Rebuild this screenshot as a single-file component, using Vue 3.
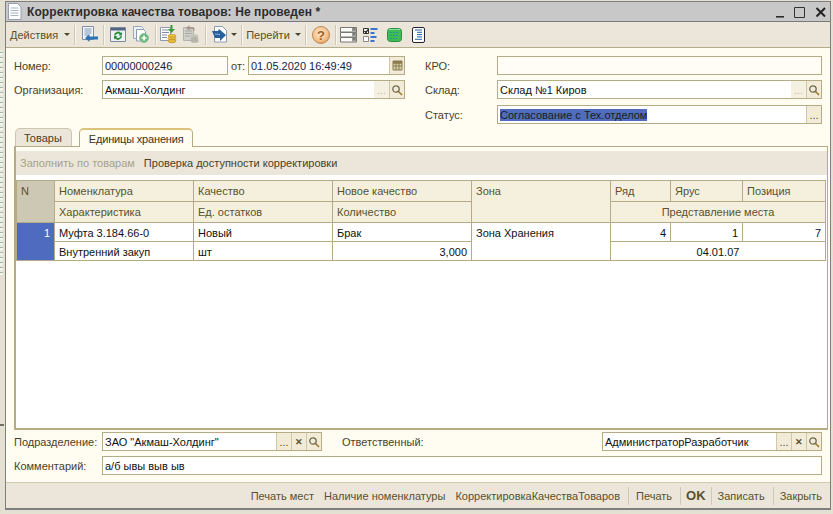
<script setup>
const footerActions = [
  { label: 'Печать мест' },
  { label: 'Наличие номенклатуры' },
  { label: 'КорректировкаКачестваТоваров' },
  { label: 'Печать', sep: true },
  { label: 'OK', sep: true, bold: true },
  { label: 'Записать', sep: true, tight: true, narrow: true },
  { label: 'Закрыть', sep: true, narrow: true }
]
</script>

<template>
  <div class="desktop">
    <div class="window">
      <header class="title">
        <svg class="doc" width="15" height="17" viewBox="0 0 15 17">
          <path d="M1.500.5h9l3.500 3.500v12.500h-12.500z" fill="#fff" stroke="#94a0b2" />
          <path d="M3.500 5h8M3.500 7.500h8M3.500 10h8M3.500 12.500h8" stroke="#a9b4c4" />
        </svg>
        <span class="title-text">Корректировка качества товаров: Не проведен *</span>
        <svg class="win-btns" width="54" height="15" viewBox="0 0 54 15">
          <path d="M0 12.800h8" stroke="#222" stroke-width="1.500" />
          <path d="M18.500 3.500h10v10h-10z" fill="none" stroke="#333" />
          <path d="M40.500 4l8.500 8.500M49 4l-8.500 8.500" stroke="#222" stroke-width="2" />
        </svg>
      </header>

      <div class="toolbar">
        <span class="tool-text">Действия</span><i class="caret c6"></i>
        <b class="tsep s4"></b>
        <svg class="m6" width="17" height="17" viewBox="0 0 17 17">
          <path d="M1.500 .5h11v13h-11z" fill="#f4f7fb" stroke="#7f8ea5" />
          <path d="M3.500 3h7M3.500 5h7M3.500 7h7M3.500 9h4" stroke="#7b93b8" />
          <path d="M17 10.500H8.500V8L4 12l4.500 4v-2.500H17z" fill="#2e74b5" />
        </svg>
        <b class="tsep s5"></b>
        <svg class="m6" width="16" height="15" viewBox="0 0 16 15">
          <path d="M.5 .5h15v14H.500z" fill="#eef2f7" stroke="#7d8a9c" />
          <path d="M1 1h14v2.500H1z" fill="#51667f" />
          <path d="M4 8.500a4 4 0 0 1 7-2.500l1-1v3.500H8.500l1.200-1.200A2.500 2.500 0 0 0 5.500 8.500zM12 9a4 4 0 0 1-7 2.500l-1 1V9h3.500l-1.200 1.200a2.500 2.500 0 0 0 4.200-1.200z" fill="#2f8f3a" />
        </svg>
        <svg class="m7" width="16" height="17" viewBox="0 0 16 17">
          <path d="M.5 .5h8l2 2v10h-10z" fill="#eef1f6" stroke="#9aa7b8" />
          <path d="M3.500 3.500h7l2 2v9.500h-9z" fill="#fff" stroke="#8d9aae" />
          <circle cx="11" cy="12" r="4.500" fill="#6db57c" stroke="#8cc79a" />
          <path d="M8.500 12h5M11 9.500v5" stroke="#fff" stroke-width="1.600" />
        </svg>
        <b class="tsep s6"></b>
        <svg class="m4" width="17" height="19" viewBox="0 0 17 19">
          <path d="M.5 2.500h10v13H.500z" fill="#fff" stroke="#8d9aae" />
          <path d="M2 5h7M2 7.500h7M2 10h5M2 12.500h5" stroke="#7d8ca3" />
          <path d="M10.500 0v4H8l3.500 4 3.500-4h-2.500V0z" fill="#3c9a3c" />
          <ellipse cx="12" cy="11" rx="4" ry="1.800" fill="#f0c340" stroke="#a87d18" stroke-width=".5" />
          <ellipse cx="12" cy="13.500" rx="4" ry="1.800" fill="#e8b93a" stroke="#a87d18" stroke-width=".5" />
          <ellipse cx="12" cy="16" rx="4" ry="1.800" fill="#e8b93a" stroke="#a87d18" stroke-width=".5" />
        </svg>
        <svg class="m6" width="16" height="19" viewBox="0 0 16 19">
          <path d="M.5 2.500h10v13H.500z" fill="#cfcfcb" stroke="#b2b2ac" />
          <path d="M2 6h7M2 8.500h7M2 11h5" stroke="#a9a9a3" />
          <path d="M6.500 0L3 3l3.500 3V4h3l2 2V3L9.500 2h-3z" fill="#a8988f" />
          <ellipse cx="11.500" cy="11" rx="4" ry="1.800" fill="#c4c4bb" />
          <ellipse cx="11.500" cy="13.500" rx="4" ry="1.800" fill="#b5b5aa" />
          <ellipse cx="11.500" cy="16" rx="4" ry="1.800" fill="#b5b5aa" />
        </svg>
        <b class="tsep s6"></b>
        <svg class="m6" width="16" height="17" viewBox="0 0 16 17">
          <path d="M2.500 .5h8l4 4v11.500h-12z" fill="#fff" stroke="#8d9aae" />
          <path d="M0 5h6l1-2 7 6-6 6v-3H3z" fill="#27609f" />
          <path d="M3 8l5 .5" stroke="#8fb4dc" />
        </svg>
        <i class="caret c3"></i>
        <b class="tsep s4"></b>
        <span class="tool-text m4">Перейти</span><i class="caret c5"></i>
        <b class="tsep s4"></b>
        <svg class="m6" width="18" height="18" viewBox="0 0 18 18">
          <defs>
            <radialGradient id="helpfill" cx="45%" cy="40%" r="60%">
              <stop offset="0" stop-color="#fbe6cb" />
              <stop offset=".7" stop-color="#f6c48f" />
              <stop offset="1" stop-color="#e89c55" />
            </radialGradient>
          </defs>
          <circle cx="9" cy="9" r="8.500" fill="url(#helpfill)" stroke="#b98b57" />
          <text x="9" y="13.500" text-anchor="middle" class="q">?</text>
        </svg>
        <b class="tsep s5"></b>
        <svg class="m4" width="17" height="16" viewBox="0 0 17 16">
          <path d="M.5 .5h16v4.500H.500zM.5 5.500h16V10H.500zM.5 10.500h16v4.500H.500z" fill="#fbfbf8" stroke="#777" />
          <path d="M12 1h4v3.500h-4zM12 6h4v3.500h-4zM12 11h4v3.500h-4z" fill="#9b9b95" />
          <path d="M13.500 2h1M13.500 7h1M13.500 12h1" stroke="#222" />
        </svg>
        <svg class="m6" width="15" height="16" viewBox="0 0 15 16">
          <path d="M.5 1.500h5v5h-5z" fill="#fff" stroke="#333" />
          <path d="M1.500 4l1.500 1.500 2-3" fill="none" stroke="#111" stroke-width="1.200" />
          <path d="M.5 9.500h5v5h-5z" fill="#fff" stroke="#888" />
          <path d="M7.500 1h7v2h-7zM7.500 5h4v2h-4zM7.500 9h6v2h-6zM7.500 13h4v2h-4z" fill="#3a74d0" />
        </svg>
        <svg class="m9" width="15" height="14" viewBox="0 0 15 14">
          <rect x=".5" y=".5" width="14" height="13" rx="3" fill="#3ebd57" stroke="#2b8c3f" />
          <path d="M2 1.500h11" stroke="#8fe09f" />
          <path d="M3 4.500h9M3 7.500h9M3 10.500h7" stroke="#2a8fa0" stroke-dasharray="2 1" />
        </svg>
        <svg class="m10" width="13" height="16" viewBox="0 0 13 16">
          <rect x=".5" y=".5" width="12" height="15" rx="1.500" fill="#fff" stroke="#223" />
          <path d="M3 3h7M5 5.300h5M5 7.600h5M5 9.900h5M3 12.300h7" stroke="#27609f" />
        </svg>
      </div>

      <main class="form">
        <div class="head">
          <div class="col">
            <div class="row">
              <label class="lbl">Номер:</label>
              <div class="field num"><span class="val">00000000246</span></div>
              <span class="from">от:</span>
              <div class="field grow">
                <span class="val navy">01.05.2020 16:49:49</span>
                <span class="btn">
                  <svg width="11" height="11" viewBox="0 0 11 11">
                    <path d="M1 3h9v7H1z" fill="#d8cfa8" stroke="#8a7c50" />
                    <path d="M1 1h9v2H1zM4 3v7M7 3v7M1 6h9" fill="#8a7c50" stroke="#8a7c50" />
                  </svg>
                </span>
              </div>
            </div>
            <div class="row">
              <label class="lbl">Организация:</label>
              <div class="field grow">
                <span class="val">Акмаш-Холдинг</span>
                <span class="btn pale">...</span>
                <span class="btn"><svg width="12" height="12" viewBox="0 0 12 12"><circle cx="5" cy="5" r="3.200" fill="none" stroke="#6f6a50" stroke-width="1.300" /><path d="M7.500 7.500L11 11" stroke="#9a7a30" stroke-width="1.600" /></svg></span>
              </div>
            </div>
          </div>
          <div class="col right">
            <div class="row">
              <label class="lbl short">КРО:</label>
              <div class="field grow"></div>
            </div>
            <div class="row">
              <label class="lbl short">Склад:</label>
              <div class="field grow">
                <span class="val">Склад №1 Киров</span>
                <span class="btn pale">...</span>
                <span class="btn"><svg width="12" height="12" viewBox="0 0 12 12"><circle cx="5" cy="5" r="3.200" fill="none" stroke="#6f6a50" stroke-width="1.300" /><path d="M7.500 7.500L11 11" stroke="#9a7a30" stroke-width="1.600" /></svg></span>
              </div>
            </div>
            <div class="row status">
              <label class="lbl short">Статус:</label>
              <div class="field grow">
                <span class="val"><span class="selected">Согласование с Тех.отделом</span></span>
                <span class="btn">...</span>
              </div>
            </div>
          </div>
        </div>

        <div class="tabs">
          <span class="tab">Товары</span>
          <span class="tab active">Единицы хранения</span>
        </div>
        <section class="panel">
          <div class="cmd">
            <span class="off">Заполнить по товарам</span>
            <span>Проверка доступности корректировки</span>
          </div>
          <table class="grid">
            <colgroup>
              <col style="width:38px" />
              <col style="width:139px" />
              <col style="width:139px" />
              <col style="width:139px" />
              <col style="width:139px" />
              <col style="width:60px" />
              <col style="width:72px" />
              <col style="width:83px" />
            </colgroup>
            <thead>
              <tr>
                <th class="n" rowspan="2">N</th>
                <th>Номенклатура</th>
                <th>Качество</th>
                <th>Новое качество</th>
                <th class="top" rowspan="2">Зона</th>
                <th>Ряд</th>
                <th>Ярус</th>
                <th>Позиция</th>
              </tr>
              <tr>
                <th>Характеристика</th>
                <th>Ед. остатков</th>
                <th>Количество</th>
                <th class="c" colspan="3">Представление места</th>
              </tr>
            </thead>
            <tbody>
              <tr>
                <td class="idx" rowspan="2">1</td>
                <td>Муфта 3.184.66-0</td>
                <td>Новый</td>
                <td>Брак</td>
                <td class="top" rowspan="2">Зона Хранения</td>
                <td class="r">4</td>
                <td class="r">1</td>
                <td class="r">7</td>
              </tr>
              <tr>
                <td>Внутренний закуп</td>
                <td>шт</td>
                <td class="r">3,000</td>
                <td class="c" colspan="3">04.01.07</td>
              </tr>
            </tbody>
          </table>
        </section>

        <div class="row">
          <label class="lbl">Подразделение:</label>
          <div class="field dept">
            <span class="val">ЗАО "Акмаш-Холдинг"</span>
            <span class="btn">...</span>
            <span class="btn x">✕</span>
            <span class="btn"><svg width="12" height="12" viewBox="0 0 12 12"><circle cx="5" cy="5" r="3.200" fill="none" stroke="#6f6a50" stroke-width="1.300" /><path d="M7.500 7.500L11 11" stroke="#9a7a30" stroke-width="1.600" /></svg></span>
          </div>
          <label class="resp">Ответственный:</label>
          <div class="field dept">
            <span class="val">АдминистраторРазработчик</span>
            <span class="btn">...</span>
            <span class="btn x">✕</span>
            <span class="btn"><svg width="12" height="12" viewBox="0 0 12 12"><circle cx="5" cy="5" r="3.200" fill="none" stroke="#6f6a50" stroke-width="1.300" /><path d="M7.500 7.500L11 11" stroke="#9a7a30" stroke-width="1.600" /></svg></span>
          </div>
        </div>
        <div class="row comment">
          <label class="lbl">Комментарий:</label>
          <div class="field grow"><span class="val">а/б ывы выв ыв</span></div>
        </div>
      </main>

      <footer class="footer">
        <span
          v-for="a in footerActions"
          :key="a.label"
          class="act"
          :class="{ sep: a.sep, bold: a.bold, tight: a.tight, narrow: a.narrow }"
        >{{ a.label }}</span>
      </footer>
    </div>
  </div>
</template>

<style>
html, body {
  margin: 0;
  background: #ece9d8;
}
</style>

<style scoped>
* {
  box-sizing: border-box;
}
.desktop {
  width: 833px;
  height: 514px;
  padding: 1px 2px 4px 5px;
  overflow: hidden;
  font-family: "Liberation Sans", Arial, sans-serif;
  font-size: 11px;
  color: #4a4226;
  background:
    linear-gradient(#6f6f6a, #6f6f6a) 0 424px / 4px 2px no-repeat,
    repeating-linear-gradient(#e6ebe0 0 2px, #a5b8a2 2px 3px, #f4f4ee 3px 5px) 0 50px / 3px 225px no-repeat,
    #e4e1d2;
}
.window {
  height: 509px;
  display: flex;
  flex-direction: column;
  border: 1px solid #7f7f7f;
  border-bottom-width: 2px;
  background: #fffcf2;
}
.title {
  height: 20px;
  flex: none;
  display: flex;
  align-items: center;
  padding-left: 1px;
  background: #c8c8c8;
  border-bottom: 1px solid #7a7a7a;
}
.doc {
  flex: none;
}
.title-text {
  margin-left: 5px;
  font-size: 12px;
  font-weight: bold;
  letter-spacing: .09px;
  color: #2d2d2d;
}
.win-btns {
  margin-left: auto;
}
.toolbar {
  height: 26px;
  flex: none;
  display: flex;
  align-items: center;
  padding-left: 4px;
  background: #ebe6d9;
  border-bottom: 1px solid #b5ac8a;
}
.toolbar svg {
  flex: none;
}
.tool-text {
  color: #5c4f1f;
}
.caret {
  flex: none;
  width: 0;
  height: 0;
  border: 3px solid transparent;
  border-top-color: #4a4430;
  border-bottom-width: 0;
}
.c3 {
  margin-left: 3px;
}
.c5 {
  margin-left: 5px;
}
.c6 {
  margin-left: 6px;
}
.tsep {
  flex: none;
  width: 1px;
  height: 20px;
  background: #cfc8b2;
  box-shadow: 1px 0 0 #f8f5ec;
}
.s4 {
  margin-left: 4px;
}
.s5 {
  margin-left: 5px;
}
.s6 {
  margin-left: 6px;
}
.m4 {
  margin-left: 4px;
}
.m6 {
  margin-left: 6px;
}
.m7 {
  margin-left: 7px;
}
.m9 {
  margin-left: 9px;
}
.m10 {
  margin-left: 10px;
}
.q {
  font: bold 13px "Liberation Sans", sans-serif;
  fill: #a0622a;
}
.form {
  flex: 1;
  min-height: 0;
  display: flex;
  flex-direction: column;
  padding: 8px 2px 0 8px;
}
.head {
  display: flex;
  height: 72px;
  flex: none;
}
.col {
  width: 391px;
  display: flex;
  flex-direction: column;
  gap: 5px;
}
.col.right {
  flex: 1;
  margin-left: 20px;
  padding-right: 6px;
}
.row {
  display: flex;
  align-items: center;
  height: 19px;
  flex: none;
}
.status {
  margin-top: 1px;
}
.lbl {
  width: 88px;
  flex: none;
}
.lbl.short {
  width: 72px;
}
.field {
  height: 19px;
  display: flex;
  align-items: stretch;
  background: #fffdf6;
  border: 1px solid #b5ac85;
  color: #111;
}
.val {
  flex: 1;
  min-width: 0;
  padding: 1px 0 0 2px;
  line-height: 16px;
  white-space: nowrap;
  overflow: hidden;
  background: #fff;
}
.navy {
  color: #14233f;
}
.field.num {
  width: 126px;
  color: #14233f;
}
.field.num .val {
  background: #fffdf6;
}
.from {
  width: 20px;
  text-align: center;
}
.grow {
  flex: 1;
  min-width: 0;
}
.btn {
  width: 15px;
  flex: none;
  display: flex;
  align-items: center;
  justify-content: center;
  background: #f1ebd8;
  border-left: 1px solid #cfc7a8;
  color: #5c5030;
}
.btn.pale {
  color: #bdb79e;
  background: #f5f1e2;
  border-left: 0;
}
.btn.x {
  font-size: 9px;
  font-weight: bold;
}
.selected {
  background: #4f6dbc;
  color: #1c1c1c;
}
.tabs {
  display: flex;
  flex: none;
  height: 18px;
  margin-left: 1px;
  gap: 7px;
  position: relative;
  z-index: 1;
}
.tab {
  height: 18px;
  padding: 0 9px 0 8px;
  line-height: 18px;
  background: #ebe6d9;
  border: 1px solid #cdc6ad;
  border-bottom: 0;
  border-radius: 5px 5px 0 0;
}
.tab.active {
  height: 19px;
  padding: 0 9px;
  letter-spacing: -.18px;
  background: #fffcf2;
  border-color: #b5ac85;
  border-top: 2px solid #dcc27a;
  color: #3a3420;
}
.panel {
  height: 284px;
  flex: none;
  margin-bottom: 2px;
  padding-top: 4px;
  border: 1px solid #b5ac85;
  border-width: 1px 1px 2px 2px;
  background: linear-gradient(#fffcf2 0 4px, #fff 4px);
}
.cmd {
  height: 24px;
  display: flex;
  align-items: center;
  gap: 9px;
  padding-left: 4px;
  margin-bottom: 5px;
  background: #ebe6d9;
}
.off {
  color: #a8a288;
}
.grid {
  width: 810px;
  table-layout: fixed;
  border-collapse: collapse;
}
.grid th, .grid td {
  height: 19px;
  padding: 0 4px;
  border: 1px solid #b5ac85;
  font-weight: normal;
  text-align: left;
  white-space: nowrap;
  overflow: hidden;
}
.grid td {
  padding-top: 1px;
  color: #111;
}
.grid thead th {
  height: 21px;
  background: #f4f0dd;
  color: #5a5030;
}
.grid thead .n {
  background: #cdc8b3;
  vertical-align: top;
  padding-top: 4px;
}
.grid .top {
  vertical-align: top;
  padding-top: 4px;
}
.grid .idx {
  background: #4f6bc0;
  color: #fff;
  text-align: right;
  vertical-align: top;
  padding-top: 4px;
}
.grid .r {
  text-align: right;
}
.grid .c {
  text-align: center;
}
.field.dept {
  width: 220px;
}
.resp {
  width: 280px;
  padding-left: 20px;
  flex: none;
}
.comment {
  margin-top: 5px;
}
.comment .grow {
  margin-right: 6px;
}
.footer {
  height: 26px;
  flex: none;
  display: flex;
  align-items: center;
  justify-content: flex-end;
  padding-right: 8px;
  background: #ebe6d9;
  border-top: 1px solid #d0c9b0;
  color: #5a5030;
}
.act {
  margin-left: 10px;
}
.act.sep {
  margin-left: 8px;
  padding-left: 7px;
  border-left: 1px solid #cfc8b2;
  line-height: 18px;
}
.act.bold {
  padding-left: 5px;
  font-weight: bold;
  font-size: 13px;
}
.act.tight {
  margin-left: 5px;
}
.act.narrow {
  padding-left: 6px;
}
</style>
